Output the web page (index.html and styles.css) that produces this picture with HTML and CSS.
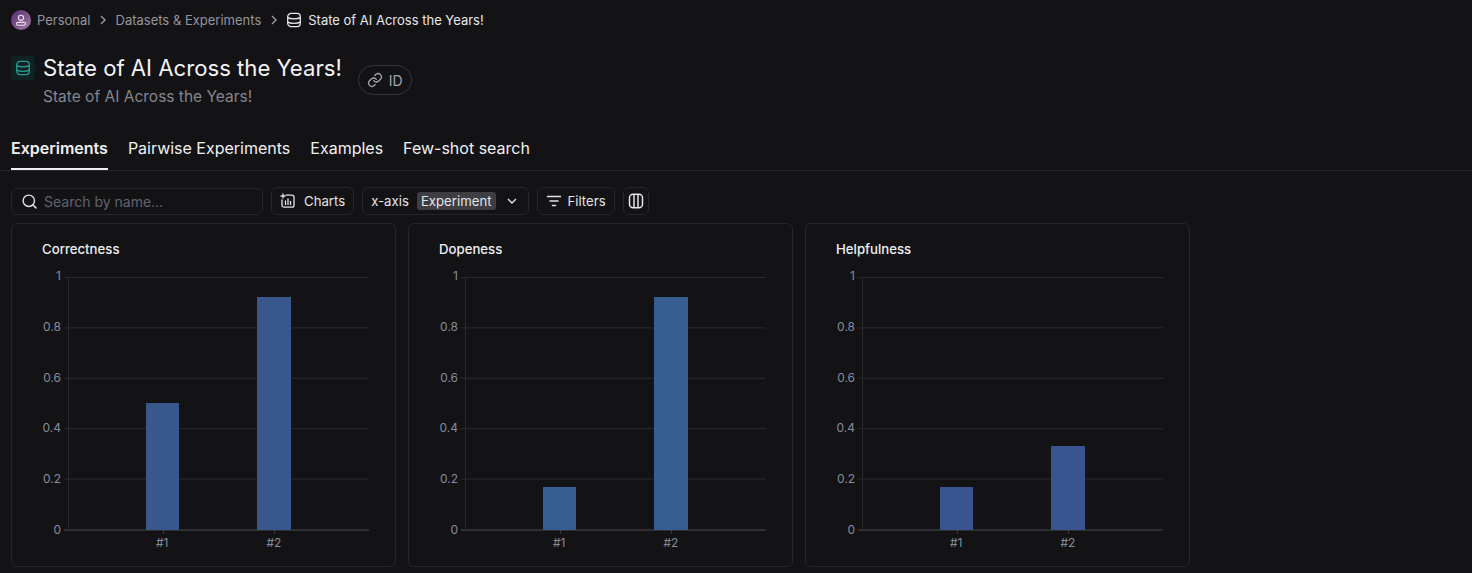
FILE: index.html
```html
<!DOCTYPE html>
<html lang="en">
<head>
  <meta charset="UTF-8">
  <meta name="viewport" content="width=device-width, initial-scale=1.0">
  <title>State of AI Across the Years!</title>
  <link rel="stylesheet" href="styles.css">
</head>
<body>
  <nav class="crumbs">
    <span class="avatar">
      <svg viewBox="0 0 20 20" width="20" height="20" fill="none" stroke="#efe3f1" stroke-width="1.1"><circle cx="10" cy="7.800" r="2.600"/><rect x="5.500" y="12.400" width="9" height="2.800" rx="1.400"/></svg>
    </span>
    <span class="crumb">Personal</span>
    <svg class="chev" viewBox="0 0 16 16" width="16" height="16" fill="none" stroke="#9a9aa2" stroke-width="1.4"><path d="M6 4l4 4-4 4"/></svg>
    <span class="crumb">Datasets &amp; Experiments</span>
    <svg class="chev" viewBox="0 0 16 16" width="16" height="16" fill="none" stroke="#9a9aa2" stroke-width="1.4"><path d="M6 4l4 4-4 4"/></svg>
    <svg class="db" viewBox="0 0 16 16" width="16" height="16" fill="none" stroke="#e8e8ea" stroke-width="1.300"><rect x="1.700" y="1.400" width="12.600" height="13.200" rx="3.400"/><path d="M1.700 5.600c2.500 1.700 10.100 1.700 12.600 0M1.700 10.100c2.500 1.700 10.100 1.700 12.600 0"/></svg>
    <span class="crumb current">State of AI Across the Years!</span>
  </nav>

  <header class="head">
    <span class="head-icon">
      <svg viewBox="0 0 16 16" width="16" height="16" fill="none" stroke="#2a9d8f" stroke-width="1.300"><rect x="1.700" y="1.400" width="12.600" height="13.200" rx="3.400"/><path d="M1.700 5.600c2.500 1.700 10.100 1.700 12.600 0M1.700 10.100c2.500 1.700 10.100 1.700 12.600 0"/></svg>
    </span>
    <div class="head-text">
      <h1>State of AI Across the Years!</h1>
      <p>State of AI Across the Years!</p>
    </div>
    <span class="id-pill">
      <svg viewBox="0 0 24 24" width="16" height="16" fill="none" stroke="#a3a3aa" stroke-width="2" stroke-linecap="round"><path d="M10 13a5 5 0 0 0 7.500.5l3-3a5 5 0 0 0-7-7l-1.700 1.700"/><path d="M14 11a5 5 0 0 0-7.500-.5l-3 3a5 5 0 0 0 7 7l1.700-1.700"/></svg>
      ID
    </span>
  </header>

  <div class="tabs">
    <a class="tab active">Experiments</a>
    <a class="tab">Pairwise Experiments</a>
    <a class="tab">Examples</a>
    <a class="tab">Few-shot search</a>
  </div>

  <div class="toolbar">
    <label class="search">
      <svg viewBox="0 0 24 24" width="17" height="17" fill="none" stroke="#e4e4e7" stroke-width="2" stroke-linecap="round"><circle cx="11" cy="11" r="8"/><path d="M21 21l-4.300-4.300"/></svg>
      <span>Search by name...</span>
    </label>
    <button class="btn">
      <svg viewBox="0 0 16 16" width="16" height="16" fill="none" stroke="#e4e4e7" stroke-width="1.300" stroke-linecap="round"><path d="M6 2.200h6a2 2 0 0 1 2 2v8a2 2 0 0 1-2 2H4a2 2 0 0 1-2-2V7"/><path d="M3 1v4M1 3h4M5.500 8v3.500M8 6v5.500M10.500 8.500v3"/></svg>
      Charts
    </button>
    <button class="btn">
      x-axis <span class="tag">Experiment</span>
      <svg viewBox="0 0 16 16" width="16" height="16" fill="none" stroke="#e4e4e7" stroke-width="1.400"><path d="M4 6l4 4 4-4"/></svg>
    </button>
    <button class="btn filters">
      <svg viewBox="0 0 16 16" width="16" height="16" fill="none" stroke="#e4e4e7" stroke-width="1.500" stroke-linecap="round"><path d="M1.500 3.500h13M4 8h8M6.500 12.500h3"/></svg>
      Filters
    </button>
    <button class="btn icon-only">
      <svg viewBox="0 0 16 16" width="16" height="16" fill="none" stroke="#e4e4e7" stroke-width="1.500"><rect x="1.500" y="1.200" width="13" height="13.600" rx="3.500"/><path d="M6 1.200v13.600M10 1.200v13.600"/></svg>
    </button>
  </div>

  <section class="charts" id="charts"></section>

  <script>
    const PLOT_HEIGHT = 252;
    const charts = [
      { title: 'Correctness', values: [0.5, 0.92], color: '#38588c' },
      { title: 'Dopeness', values: [0.167, 0.92], color: '#365f8f' },
      { title: 'Helpfulness', values: [0.167, 0.33], color: '#3a5490' },
    ];
    const ticks = [1, 0.8, 0.6, 0.4, 0.2, 0];

    function drawChart(chart) {
      const card = document.createElement('div');
      card.className = 'card';

      const title = document.createElement('div');
      title.className = 'card-title';
      title.textContent = chart.title;
      card.appendChild(title);

      const plot = document.createElement('div');
      plot.className = 'plot';

      const yAxis = document.createElement('div');
      yAxis.className = 'y-axis';
      ticks.forEach(t => {
        const label = document.createElement('span');
        label.textContent = t;
        yAxis.appendChild(label);
      });
      plot.appendChild(yAxis);

      const area = document.createElement('div');
      area.className = 'area';
      chart.values.forEach(v => {
        const bar = document.createElement('div');
        bar.className = 'bar';
        bar.style.height = `${v * PLOT_HEIGHT + 1}px`;
        bar.style.background = chart.color;
        area.appendChild(bar);
      });
      plot.appendChild(area);
      card.appendChild(plot);

      const xAxis = document.createElement('div');
      xAxis.className = 'x-axis';
      chart.values.forEach((v, i) => {
        const label = document.createElement('span');
        label.textContent = `#${i + 1}`;
        xAxis.appendChild(label);
      });
      card.appendChild(xAxis);

      return card;
    }

    const wrap = document.getElementById('charts');
    charts.forEach(c => wrap.appendChild(drawChart(c)));
  </script>
</body>
</html>
```

FILE: styles.css
```css
* {
  box-sizing: border-box;
}
html, body {
  height: 573px;
  overflow: hidden;
}
body {
  margin: 0;
  background-color: #131316;
  color: #ececee;
  font-family: Inter, "Liberation Sans", sans-serif;
}
.crumbs {
  display: flex;
  align-items: center;
  height: 20px;
  margin: 10px 0 0 11px;
  font-size: 13px;
}
.avatar {
  width: 20px;
  height: 20px;
  border-radius: 50%;
  background: linear-gradient(135deg, #55296f, #a57fa8);
  margin-right: 6px;
  display: flex;
}
.crumb {
  color: #94949c;
}
.crumb.current {
  color: #e8e8ea;
}
.chev {
  margin: 0 4.5px;
}
.db {
  margin: 0 6px 0 0;
}
.head {
  display: flex;
  align-items: flex-start;
  margin: 24px 0 0 11px;
  height: 56px;
}
.head-icon {
  width: 24px;
  height: 24px;
  border-radius: 4px;
  background: #112225;
  display: flex;
  align-items: center;
  justify-content: center;
  margin: 2px 8px 0 0;
}
.head-text h1 {
  margin: 0;
  font-size: 22.15px;
  font-weight: 400;
  line-height: 29px;
  color: #f4f4f5;
}
.head-text p {
  margin: 0;
  font-size: 15.5px;
  line-height: 28px;
  color: #85858d;
}
.id-pill {
  display: flex;
  align-items: center;
  gap: 6px;
  height: 30px;
  margin: 11px 0 0 16px;
  padding: 0 8px;
  border: 1px solid #35353a;
  border-radius: 15px;
  font-size: 14px;
  color: #a3a3aa;
}
.tabs {
  display: flex;
  gap: 20px;
  margin-top: 20px;
  padding-left: 11px;
  height: 41px;
  border-bottom: 1px solid #26262a;
}
.tab {
  height: 40px;
  padding-top: 8px;
  font-size: 16px;
  line-height: 20px;
  color: #f0f0f2;
}
.tab.active {
  font-weight: 600;
  border-bottom: 2px solid #f0f0f2;
}
.toolbar {
  display: flex;
  align-items: center;
  gap: 8px;
  margin: 16px 0 0 11px;
  height: 28px;
}
.search {
  display: flex;
  align-items: center;
  gap: 6px;
  width: 252px;
  height: 27px;
  padding-left: 9px;
  border: 1px solid #26262a;
  border-radius: 6px;
  font-size: 14px;
  color: #62626c;
}
.btn {
  display: flex;
  align-items: center;
  gap: 8px;
  height: 28px;
  padding: 0 8px;
  background: none;
  border: 1px solid #26262a;
  border-radius: 6px;
  color: #e4e4e7;
  font-family: inherit;
  font-size: 13.2px;
}
.btn.filters {
  gap: 6px;
}
.btn.icon-only {
  padding: 0 4px;
}
.tag {
  background: #3d3d43;
  border-radius: 3px;
  padding: 0 4px;
  line-height: 18px;
}
.charts {
  display: flex;
  gap: 12.5px;
  margin: 8px 0 0 11px;
}
.card {
  width: 384.5px;
  height: 344px;
  padding: 17px 25.5px 0 0;
  border: 1px solid #26262a;
  border-radius: 6px;
}
.card-title {
  margin-left: 30px;
  font-size: 13.2px;
  font-weight: 500;
  line-height: 16px;
  color: #f0f0f2;
}
.plot {
  display: flex;
  height: 254px;
  margin-top: 20px;
}
.y-axis {
  width: 52px;
  flex: none;
  display: flex;
  flex-direction: column;
  justify-content: space-between;
  align-items: flex-end;
  padding-right: 3px;
  margin: -8px 0 -6px;
  font-size: 12px;
  line-height: 14px;
  color: #858c9a;
}
/* gridlines and the y axis line start 4px left, that part is the tick mark */
.area {
  flex: 1;
  display: flex;
  gap: 78px;
  padding-left: 82px;
  border-bottom: 2px solid #2e2e33;
  background-image:
    linear-gradient(#2a2a2e, #2a2a2e),
    linear-gradient(#2a2a2e 1px, transparent 1px);
  background-size: 1px 100%, 100% 50.4px;
  background-position: 4px 0, 0 0;
  background-repeat: no-repeat, repeat-y;
}
.bar {
  position: relative;
  width: 33.4px;
  align-self: flex-end;
  margin-bottom: -1px;
}
.bar::after {
  content: "";
  position: absolute;
  left: 50%;
  bottom: -4px;
  width: 1px;
  height: 4px;
  background: #3a3a3f;
}
.x-axis {
  display: flex;
  gap: 98px;
  margin: 5px 0 0 144px;
  font-size: 12px;
  line-height: 14px;
  color: #858c9a;
}
```
